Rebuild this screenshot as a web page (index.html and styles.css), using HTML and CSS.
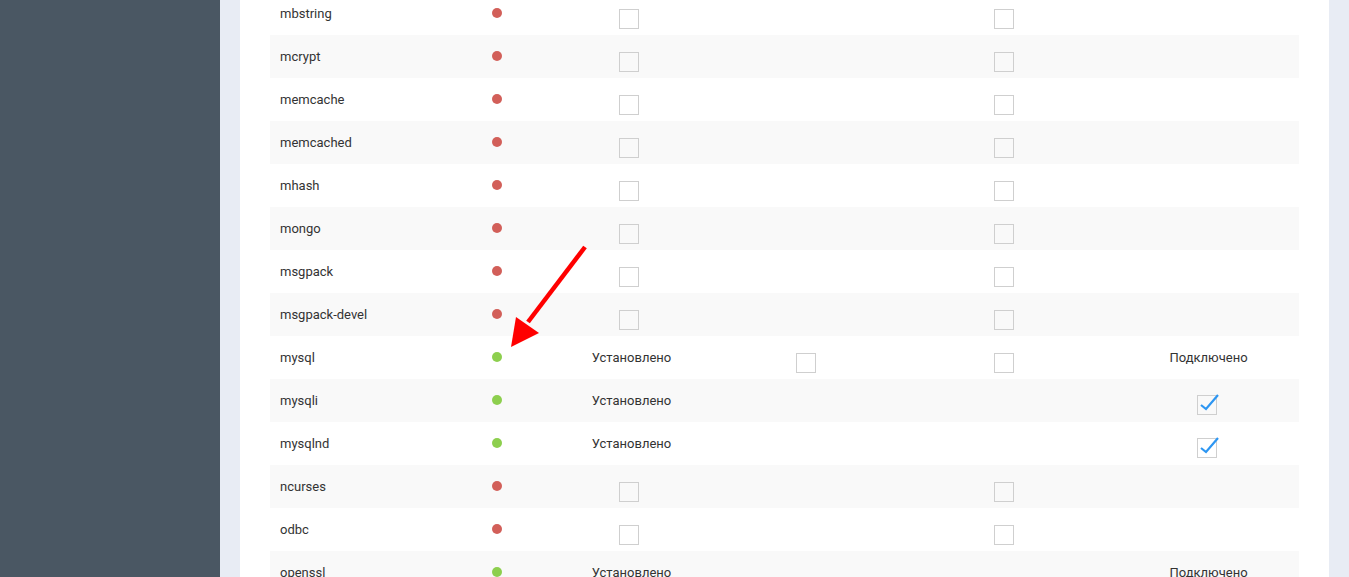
FILE: index.html
```html
<!DOCTYPE html>
<html lang="ru">
<head>
<meta charset="utf-8">
<link rel="stylesheet" href="styles.css">
</head>
<body>
<div class="layout">
  <aside class="sidebar"></aside>
  <main class="main">
    <section class="panel">
      <div class="table">
        <div class="row"><div class="name">mbstring</div><div class="cell"><span class="dot off"></span></div><div class="cell"><span class="box"></span></div><div class="cell"></div><div class="cell"><span class="box"></span></div><div class="cell"></div></div>
        <div class="row alt"><div class="name">mcrypt</div><div class="cell"><span class="dot off"></span></div><div class="cell"><span class="box"></span></div><div class="cell"></div><div class="cell"><span class="box"></span></div><div class="cell"></div></div>
        <div class="row"><div class="name">memcache</div><div class="cell"><span class="dot off"></span></div><div class="cell"><span class="box"></span></div><div class="cell"></div><div class="cell"><span class="box"></span></div><div class="cell"></div></div>
        <div class="row alt"><div class="name">memcached</div><div class="cell"><span class="dot off"></span></div><div class="cell"><span class="box"></span></div><div class="cell"></div><div class="cell"><span class="box"></span></div><div class="cell"></div></div>
        <div class="row"><div class="name">mhash</div><div class="cell"><span class="dot off"></span></div><div class="cell"><span class="box"></span></div><div class="cell"></div><div class="cell"><span class="box"></span></div><div class="cell"></div></div>
        <div class="row alt"><div class="name">mongo</div><div class="cell"><span class="dot off"></span></div><div class="cell"><span class="box"></span></div><div class="cell"></div><div class="cell"><span class="box"></span></div><div class="cell"></div></div>
        <div class="row"><div class="name">msgpack</div><div class="cell"><span class="dot off"></span></div><div class="cell"><span class="box"></span></div><div class="cell"></div><div class="cell"><span class="box"></span></div><div class="cell"></div></div>
        <div class="row alt"><div class="name">msgpack-devel</div><div class="cell"><span class="dot off"></span></div><div class="cell"><span class="box"></span></div><div class="cell"></div><div class="cell"><span class="box"></span></div><div class="cell"></div></div>
        <div class="row"><div class="name">mysql</div><div class="cell"><span class="dot on"></span></div><div class="cell status">Установлено</div><div class="cell"><span class="box"></span></div><div class="cell"><span class="box"></span></div><div class="cell">Подключено</div></div>
        <div class="row alt"><div class="name">mysqli</div><div class="cell"><span class="dot on"></span></div><div class="cell status">Установлено</div><div class="cell"></div><div class="cell"></div><div class="cell"><span class="box checked"><svg class="tick" viewBox="0 0 22 20" width="22" height="20"><path d="M3 13 L8 17 L20 3" fill="none" stroke="#2d96f2" stroke-width="2.2"/></svg></span></div></div>
        <div class="row"><div class="name">mysqlnd</div><div class="cell"><span class="dot on"></span></div><div class="cell status">Установлено</div><div class="cell"></div><div class="cell"></div><div class="cell"><span class="box checked"><svg class="tick" viewBox="0 0 22 20" width="22" height="20"><path d="M3 13 L8 17 L20 3" fill="none" stroke="#2d96f2" stroke-width="2.2"/></svg></span></div></div>
        <div class="row alt"><div class="name">ncurses</div><div class="cell"><span class="dot off"></span></div><div class="cell"><span class="box"></span></div><div class="cell"></div><div class="cell"><span class="box"></span></div><div class="cell"></div></div>
        <div class="row"><div class="name">odbc</div><div class="cell"><span class="dot off"></span></div><div class="cell"><span class="box"></span></div><div class="cell"></div><div class="cell"><span class="box"></span></div><div class="cell"></div></div>
        <div class="row alt"><div class="name">openssl</div><div class="cell"><span class="dot on"></span></div><div class="cell status">Установлено</div><div class="cell"></div><div class="cell"></div><div class="cell">Подключено</div></div>
      </div>
    </section>
  </main>
</div>
<svg class="arrow" width="100" height="120" viewBox="0 0 100 120">
  <line x1="95" y1="17" x2="38" y2="92" stroke="#ff0000" stroke-width="4.5"/>
  <polygon points="21,117 26,87 49,103" fill="#ff0000"/>
</svg>
</body>
</html>
```

FILE: styles.css
```css
html, body {
  margin: 0;
  padding: 0;
  height: 100%;
  overflow: hidden;
}
body {
  font-family: Roboto, "Liberation Sans", Arial, sans-serif;
  font-size: 13px;
  color: #333;
  background: #e8ecf4;
  position: relative;
}
.layout {
  display: flex;
  height: 577px;
}
.sidebar {
  width: 220px;
  flex: 0 0 220px;
  background: #4a5763;
}
.main {
  flex: 1;
  background: #e8ecf4;
  padding: 0 20px;
}
.panel {
  background: #fff;
  height: 100%;
  padding: 0 30px;
  overflow: hidden;
}
.table {
  margin-top: -8px;
}
.row {
  display: grid;
  grid-template-columns: 187px 80px 184px 169px 228px 181px;
  height: 43px;
  align-items: center;
  background: #fff;
}
.row.alt {
  background: #f9f9f9;
}
.name {
  padding-left: 10px;
}
.cell {
  display: flex;
  justify-content: center;
  align-items: center;
}
.cell.status {
  padding-left: 5px;
}
.dot {
  width: 10px;
  height: 10px;
  border-radius: 50%;
  margin-top: -1px;
}
.dot.off { background: #d25f59; }
.dot.on { background: #8dcf4e; }
.box {
  width: 18px;
  height: 18px;
  border: 1px solid #cfcfcf;
  margin-top: 10px;
  position: relative;
}
.box.checked {
  margin-top: 9px;
  margin-right: 4px;
}
.tick {
  position: absolute;
  left: 0;
  top: -4px;
}
.arrow {
  position: absolute;
  left: 490px;
  top: 230px;
}
```
